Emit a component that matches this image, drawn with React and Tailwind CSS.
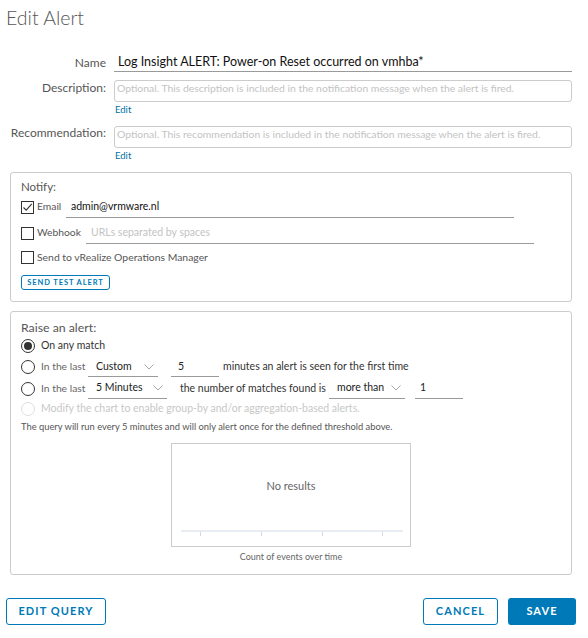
import React from "react";

const FONT = { fontFamily: "Lato, 'Open Sans', sans-serif" };

function Chevron({ className = "" }) {
  return (
    <svg width="10" height="6" viewBox="0 0 10 6" className={className}>
      <path d="M0.5 0.5 L5 5 L9.5 0.5" fill="none" stroke="#a6a6a6" strokeWidth="1" />
    </svg>
  );
}

function Checkbox({ checked }) {
  return (
    <span className="relative inline-block w-[13px] h-[13px] border border-[#333] bg-white shrink-0 box-border">
      {checked && (
        <svg width="11" height="11" viewBox="0 0 11 11" className="absolute left-0 top-0">
          <path d="M1.5 5.5 L4.2 8.2 L9.8 1.8" fill="none" stroke="#333" strokeWidth="1.1" />
        </svg>
      )}
    </span>
  );
}

function Radio({ checked, disabled }) {
  return (
    <span
      className={
        "relative inline-flex items-center justify-center w-[14px] h-[14px] rounded-full border shrink-0 box-border " +
        (disabled ? "border-[#dedede]" : "border-[#333]")
      }
    >
      {checked && <span className="block w-[8px] h-[8px] rounded-full bg-[#333]" />}
    </span>
  );
}

function Select({ value, width }) {
  return (
    <span
      className="inline-flex items-center justify-between h-[20px] border-b border-[#9a9a9a] pl-[8px] pr-[4px] box-border text-[10.5px] text-[#222]"
      style={{ width }}
    >
      <span>{value}</span>
      <Chevron />
    </span>
  );
}

export default function App() {
  return (
    <div className="w-[588px] h-[638px] bg-white relative overflow-hidden" style={FONT}>
      <div className="pl-[6px] pt-[6px] text-[19.5px] leading-[24px] text-[#565656] font-light">Edit Alert</div>

      {/* form */}
      <div className="grid grid-cols-[106px_458px] gap-x-[8px] mt-[23px]">
        <div className="h-[19px] flex items-center justify-end text-[12px] text-[#565656]">Name</div>
        <div className="h-[19px] flex items-center border-b border-[#9a9a9a] pl-[4px] text-[12.5px] text-[#111]">
          Log Insight ALERT: Power-on Reset occurred on vmhba*
        </div>

        <div className="mt-[8px] pt-[1px] text-right text-[12px] leading-[14px] text-[#565656]">Description:</div>
        <div className="mt-[8px]">
          <div className="h-[22px] border border-[#ccc] rounded-[3px] pl-[2px] pt-[0px] text-[10.4px] leading-[14px] text-[#c3c3c3]">
            Optional. This description is included in the notification message when the alert is fired.
          </div>
          <div className="mt-[2px] pl-[1px] text-[9.5px] leading-[12px] text-[#0072a3]">Edit</div>
        </div>

        <div className="mt-[10px] text-right text-[12px] leading-[14px] text-[#565656]">Recommendation:</div>
        <div className="mt-[10px]">
          <div className="h-[22px] border border-[#ccc] rounded-[3px] pl-[2px] text-[10.4px] leading-[14px] text-[#c3c3c3]">
            Optional. This recommendation is included in the notification message when the alert is fired.
          </div>
          <div className="mt-[2px] pl-[1px] text-[9.5px] leading-[12px] text-[#0072a3]">Edit</div>
        </div>
      </div>

      {/* Notify box */}
      <div className="ml-[10px] mt-[10px] w-[562px] h-[130px] border border-[#ccc] rounded-[3px] box-border pl-[10px] pt-[6px]">
        <div className="text-[11.5px] leading-[16px] text-[#565656]">Notify:</div>
        <div className="flex items-center h-[22px] mt-[1px]">
          <Checkbox checked />
          <span className="ml-[3px] w-[26px] text-[10.3px] text-[#565656]">Email</span>
          <span className="ml-[3px] w-[448px] h-[22px] border-b border-[#9a9a9a] flex items-center pl-[5px] text-[10.5px] text-[#111]">
            admin@vrmware.nl
          </span>
        </div>
        <div className="flex items-center h-[22px] mt-[4px]">
          <Checkbox />
          <span className="ml-[3px] w-[46px] text-[10.3px] text-[#565656]">Webhook</span>
          <span className="ml-[3px] w-[448px] h-[22px] border-b border-[#9a9a9a] flex items-center pl-[5px] text-[10.5px] text-[#c3c3c3]">
            URLs separated by spaces
          </span>
        </div>
        <div className="flex items-center h-[19px] mt-[4px]">
          <Checkbox />
          <span className="ml-[3px] text-[10.4px] text-[#565656]">Send to vRealize Operations Manager</span>
        </div>
        <div className="mt-[8px] w-[89px] h-[15px] border border-[#0079b8] rounded-[3px] box-border flex items-center justify-center text-[7.5px] font-bold tracking-[0.12em] text-[#0079b8]">
          SEND TEST ALERT
        </div>
      </div>

      {/* Raise an alert box */}
      <div className="ml-[10px] mt-[9px] w-[562px] h-[264px] border border-[#ccc] rounded-[3px] box-border pl-[10px] pt-[8px]">
        <div className="text-[12.3px] leading-[16px] text-[#565656]">Raise an alert:</div>
        <div className="flex items-center h-[18px] mt-[1px]">
          <Radio checked />
          <span className="ml-[6px] text-[10.5px] text-[#333]">On any match</span>
        </div>
        <div className="flex items-center h-[20px] mt-[2px]">
          <Radio />
          <span className="ml-[6px] w-[47px] text-[10.3px] text-[#666]">In the last</span>
          <Select value="Custom" width="70px" />
          <span className="ml-[13px] w-[48px] h-[20px] border-b border-[#9a9a9a] flex items-center pl-[7px] text-[10.5px] text-[#222]">5</span>
          <span className="ml-[4px] text-[10.5px] text-[#333]">minutes an alert is seen for the first time</span>
        </div>
        <div className="flex items-center h-[21px] mt-[1px]">
          <Radio />
          <span className="ml-[6px] w-[47px] text-[10.3px] text-[#666]">In the last</span>
          <Select value="5 Minutes" width="79px" />
          <span className="ml-[13px] w-[149px] text-[10.5px] text-[#333]">the number of matches found is</span>
          <Select value="more than" width="76px" />
          <span className="ml-[10px] w-[48px] h-[20px] border-b border-[#9a9a9a] flex items-center pl-[5px] text-[10.5px] text-[#222]">1</span>
        </div>
        <div className="flex items-center h-[18px] mt-[1px]">
          <Radio disabled />
          <span className="ml-[6px] text-[10.5px] text-[#c8c8c8]">Modify the chart to enable group-by and/or aggregation-based alerts.</span>
        </div>
        <div className="mt-[2px] text-[9.35px] leading-[13px] text-[#565656]">
          The query will run every 5 minutes and will only alert once for the defined threshold above.
        </div>
        <div className="mt-[10px] ml-[150px] w-[240px] h-[104px] border border-[#ccc] box-border relative">
          <div className="absolute left-0 right-0 top-[34px] text-center text-[11px] text-[#666]">No results</div>
          <div className="absolute left-[9px] top-[86px] w-[222px] h-[2px] bg-[#e8edf3]" />
          <div className="absolute left-[28px] top-[88px] w-px h-[4px] bg-[#cfd8e3]" />
          <div className="absolute left-[89px] top-[88px] w-px h-[4px] bg-[#cfd8e3]" />
          <div className="absolute left-[150px] top-[88px] w-px h-[4px] bg-[#cfd8e3]" />
          <div className="absolute left-[210px] top-[88px] w-px h-[4px] bg-[#cfd8e3]" />
        </div>
        <div className="ml-[150px] w-[240px] mt-[4px] text-center text-[9px] leading-[12px] text-[#666]">Count of events over time</div>
      </div>

      {/* Footer buttons */}
      <div className="flex items-center mt-[23px] pl-[6px] pr-[12px]">
        <div className="w-[100px] h-[27px] border border-[#0079b8] rounded-[3px] box-border flex items-center justify-center text-[11px] font-bold tracking-[0.1em] text-[#0079b8]">
          EDIT QUERY
        </div>
        <div className="flex-1" />
        <div className="w-[75px] h-[27px] border border-[#0079b8] rounded-[3px] box-border flex items-center justify-center text-[11px] font-bold tracking-[0.1em] text-[#0079b8]">
          CANCEL
        </div>
        <div className="ml-[10px] w-[68px] h-[27px] bg-[#0079b8] rounded-[3px] flex items-center justify-center text-[11px] font-bold tracking-[0.1em] text-white">
          SAVE
        </div>
      </div>
    </div>
  );
}
